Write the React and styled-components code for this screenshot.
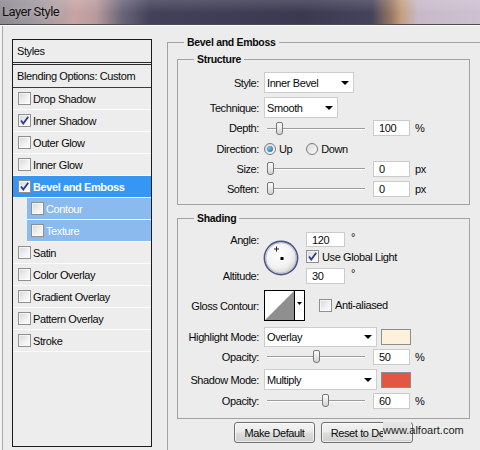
import React from "react";
import styled, { createGlobalStyle } from "styled-components";

const GlobalStyle = createGlobalStyle`
  body {
    margin: 0;
    background: #ececec;
  }
  * {
    box-sizing: border-box;
  }
`;

const effects = [
  { name: "Drop Shadow" },
  { name: "Inner Shadow", checked: true },
  { name: "Outer Glow" },
  { name: "Inner Glow" },
  { name: "Bevel and Emboss", checked: true, selected: true },
  { name: "Contour", sub: true },
  { name: "Texture", sub: true },
  { name: "Satin" },
  { name: "Color Overlay" },
  { name: "Gradient Overlay" },
  { name: "Pattern Overlay" },
  { name: "Stroke" },
];

const Check = ({ checked }) => (
  <CheckBox>
    {checked && (
      <svg width="11" height="11" viewBox="0 0 11 11">
        <path
          d="M2 5.5 L4.3 8.6 L9.2 1.8"
          fill="none"
          stroke="#2b3a86"
          strokeWidth="1.8"
        />
      </svg>
    )}
  </CheckBox>
);

const SliderControl = ({ value, max }) => (
  <Slider>
    <Thumb style={{ left: 3.5 + (value / max) * 91 }} />
  </Slider>
);

const Dropdown = ({ width, height, children }) => (
  <Select $w={width} $h={height}>
    <span>{children}</span>
    <Arrow />
  </Select>
);

const App = () => {
  return (
    <Window>
      <GlobalStyle />
      <TitleBar>
        <Title>Layer Style</Title>
      </TitleBar>
      <Body>
        <StylesPanel>
          <HeaderRow>Styles</HeaderRow>
          <BlendRow>Blending Options: Custom</BlendRow>
          {effects.map((fx) => (
            <EffectRow key={fx.name} $selected={fx.selected} $sub={fx.sub}>
              <Check checked={fx.checked} />
              <span>{fx.name}</span>
            </EffectRow>
          ))}
        </StylesPanel>

        <RightCol>
          <OuterGroup>
            <Legend>Bevel and Emboss</Legend>
            <Inner>
              <Group>
                <Legend>Structure</Legend>
                <Row $h={21}>
                  <Label>Style:</Label>
                  <Dropdown width={90}>Inner Bevel</Dropdown>
                </Row>
                <Row $h={21} $mt={4}>
                  <Label>Technique:</Label>
                  <Dropdown width={74}>Smooth</Dropdown>
                </Row>
                <Row $h={18} $mt={1}>
                  <Label>Depth:</Label>
                  <SliderControl value={100} max={1000} />
                  <Field>100</Field>
                  <Unit>%</Unit>
                </Row>
                <Row $h={20} $mt={2}>
                  <Label>Direction:</Label>
                  <Radio $checked />
                  <RadioText>Up</RadioText>
                  <Radio />
                  <RadioText>Down</RadioText>
                </Row>
                <Row $h={17} $mt={1}>
                  <Label>Size:</Label>
                  <SliderControl value={0} max={250} />
                  <Field>0</Field>
                  <Unit>px</Unit>
                </Row>
                <Row $h={17} $mt={3}>
                  <Label>Soften:</Label>
                  <SliderControl value={0} max={16} />
                  <Field>0</Field>
                  <Unit>px</Unit>
                </Row>
              </Group>

              <Group $mt={7} $pb={9}>
                <Legend>Shading</Legend>
                <AngleBlock>
                  <AngleLabels>
                    <Label $h={15}>Angle:</Label>
                    <Label $h={16}>Altitude:</Label>
                  </AngleLabels>
                  <Dial>
                    <svg width="36" height="36" viewBox="0 0 36 36">
                      <defs>
                        <radialGradient id="dialFill" cx="42%" cy="38%" r="65%">
                          <stop offset="0" stopColor="#ffffff" />
                          <stop offset="0.65" stopColor="#f1f1f1" />
                          <stop offset="1" stopColor="#cdcdcd" />
                        </radialGradient>
                      </defs>
                      <circle
                        cx="18"
                        cy="18"
                        r="16.6"
                        fill="url(#dialFill)"
                        stroke="#4b5684"
                        strokeWidth="1.6"
                      />
                      <circle
                        cx="18"
                        cy="18"
                        r="15.2"
                        fill="none"
                        stroke="#b3b8c9"
                        strokeWidth="0.8"
                      />
                      <path
                        d="M13.5 6.5v5M11 9h5"
                        stroke="#222"
                        strokeWidth="1"
                      />
                      <rect x="17.5" y="17" width="3" height="3" fill="#000" />
                    </svg>
                  </Dial>
                  <AngleFields>
                    <Row $h={15}>
                      <Field $w={39} $h={15}>
                        120
                      </Field>
                      <Degree>°</Degree>
                    </Row>
                    <Row $h={13} $mt={3}>
                      <Check checked />
                      <CheckText>Use Global Light</CheckText>
                    </Row>
                    <Row $h={16} $mt={5}>
                      <Field $w={39}>30</Field>
                      <Degree>°</Degree>
                    </Row>
                  </AngleFields>
                </AngleBlock>

                <Row $h={31} $mt={6}>
                  <Label>Gloss Contour:</Label>
                  <svg width="41" height="31" viewBox="0 0 41 31">
                    <rect
                      x="0.5"
                      y="0.5"
                      width="40"
                      height="30"
                      fill="#fff"
                      stroke="#000"
                    />
                    <polygon points="1,30 30,30 30,1" fill="#8f8f8f" />
                    <line x1="30.5" y1="0" x2="30.5" y2="31" stroke="#000" />
                    <polygon points="33,12 38,12 35.5,15" fill="#000" />
                  </svg>
                  <AntiAlias>
                    <Check />
                    <CheckText>Anti-aliased</CheckText>
                  </AntiAlias>
                </Row>

                <Row $h={20} $mt={6}>
                  <Label>Highlight Mode:</Label>
                  <Dropdown width={113} height={20}>
                    Overlay
                  </Dropdown>
                  <Swatch $color="#fdf1dd" />
                </Row>
                <Row $h={17} $mt={1}>
                  <Label>Opacity:</Label>
                  <SliderControl value={50} max={100} />
                  <Field>50</Field>
                  <Unit>%</Unit>
                </Row>
                <Row $h={21} $mt={4}>
                  <Label>Shadow Mode:</Label>
                  <Dropdown width={113}>Multiply</Dropdown>
                  <Swatch $color="#e25744" />
                </Row>
                <Row $h={17} $mt={2}>
                  <Label>Opacity:</Label>
                  <SliderControl value={60} max={100} />
                  <Field>60</Field>
                  <Unit>%</Unit>
                </Row>
              </Group>

              <Buttons>
                <Button $w={81}>Make Default</Button>
                <Button $w={92}>Reset to Default</Button>
              </Buttons>
            </Inner>
          </OuterGroup>
        </RightCol>
      </Body>
      <Watermark>www.alfoart.com</Watermark>
    </Window>
  );
};

const Window = styled.div`
  position: relative;
  width: 480px;
  height: 450px;
  overflow: hidden;
  background: #ececec;
  font-family: "Liberation Sans", Arial, sans-serif;
  font-size: 11px;
  letter-spacing: -0.4px;
  color: #0a0a0a;
`;

const TitleBar = styled.div`
  height: 25px;
  display: flex;
  align-items: center;
  padding: 0 0 1px 2px;
  border-bottom: 1px solid #4d4d4f;
  background: linear-gradient(
      180deg,
      rgba(255, 255, 255, 0.14) 0%,
      rgba(255, 255, 255, 0) 55%
    ),
    linear-gradient(
      90deg,
      #8d8991 0px,
      #a29aa2 40px,
      #c7a4a3 76px,
      #b99a9c 96px,
      #6b6579 122px,
      #43415a 150px,
      #3a3950 300px,
      #45435b 372px,
      #9c7a62 392px,
      #c39e7f 401px,
      #c8b9c9 418px,
      #cdc1d1 480px
    );
`;

const Title = styled.span`
  font-family: Roboto, "Liberation Sans", sans-serif;
  font-size: 13px;
  letter-spacing: -0.5px;
  color: #111;
  text-shadow: 0 0 6px rgba(255, 240, 240, 0.55);
`;

const Body = styled.div`
  display: flex;
  gap: 15px;
  height: 425px;
  padding-left: 12px;
  border-top: 1px solid #fafafa;
  box-shadow: inset 2px 0 0 #f3f3f3, inset 3px 0 0 #a9a9a9;
`;

const StylesPanel = styled.div`
  flex-shrink: 0;
  width: 140px;
  height: 408px;
  margin-top: 13px;
  border: 1px solid #1c1c1c;
  background: #ededed;
`;

const HeaderRow = styled.div`
  display: flex;
  align-items: center;
  height: 25px;
  padding-left: 4px;
  border-bottom: 3px double #2a2a2a;
`;

const BlendRow = styled.div`
  display: flex;
  align-items: center;
  height: 23px;
  padding-left: 4px;
  border-bottom: 1px solid #3a3a3a;
  white-space: nowrap;
`;

const EffectRow = styled.div`
  display: flex;
  align-items: center;
  gap: 2px;
  height: 22px;
  margin-left: ${(p) => (p.$sub ? 14 : 0)}px;
  padding-left: ${(p) => (p.$sub ? 4 : 5)}px;
  border-bottom: 1px solid #fbfbfb;
  background: ${(p) =>
    p.$selected ? "#3597f3" : p.$sub ? "#8bbbee" : "transparent"};
  color: ${(p) => (p.$selected || p.$sub ? "#fff" : "#0a0a0a")};
  font-weight: ${(p) => (p.$selected ? "bold" : "normal")};
  white-space: nowrap;
`;

const CheckBox = styled.span`
  flex-shrink: 0;
  display: inline-flex;
  align-items: center;
  justify-content: center;
  width: 13px;
  height: 13px;
  border: 1px solid #8e8f8f;
  background: linear-gradient(135deg, #d6d6d6 0%, #f2f2f2 60%, #fdfdfd 100%);
  box-shadow: inset 0 0 0 1px rgba(255, 255, 255, 0.6);
`;

const RightCol = styled.div`
  flex-shrink: 0;
  width: 330px;
  padding-top: 10px;
`;

const OuterGroup = styled.fieldset`
  margin: 0;
  padding: 0 0 30px;
  min-width: 0;
  border: 1px solid #a2a2a2;
  border-bottom: none;
`;

const Legend = styled.legend`
  margin-left: 16px;
  padding: 0 3px;
  font-size: 10.5px;
  line-height: 13px;
  font-weight: bold;
  letter-spacing: -0.3px;
`;

const Inner = styled.div`
  padding-left: 9px;
  margin-top: 4px;
`;

const Group = styled.fieldset`
  width: 293px;
  margin: ${(p) => p.$mt || 0}px 0 0;
  padding: 6px 0 ${(p) => p.$pb || 7}px;
  min-width: 0;
  border: 1px solid #a2a2a2;
`;

const Row = styled.div`
  display: flex;
  align-items: center;
  height: ${(p) => p.$h}px;
  margin-top: ${(p) => p.$mt || 0}px;
  white-space: nowrap;
`;

const Label = styled.div`
  flex-shrink: 0;
  width: 81px;
  height: ${(p) => (p.$h ? `${p.$h}px` : "auto")};
  display: flex;
  align-items: center;
  justify-content: flex-end;
  margin-right: 5px;
  white-space: nowrap;
`;

const Select = styled.div`
  flex-shrink: 0;
  display: flex;
  align-items: center;
  justify-content: space-between;
  width: ${(p) => p.$w}px;
  height: ${(p) => p.$h || 21}px;
  padding: 0 4px 0 2px;
  background: #fff;
  border: 1px solid #cdcdcd;
`;

const Arrow = styled.span`
  width: 0;
  height: 0;
  border-left: 4px solid transparent;
  border-right: 4px solid transparent;
  border-top: 4px solid #000;
`;

const Slider = styled.div`
  position: relative;
  flex-shrink: 0;
  width: 98px;
  height: 13px;
  margin: 0 8px 0 3px;

  &::before {
    content: "";
    position: absolute;
    left: 0;
    right: 0;
    top: 6px;
    height: 1px;
    background: #9d9d9d;
    box-shadow: 0 1px 0 #fff;
  }
`;

const Thumb = styled.span`
  position: absolute;
  top: 0;
  width: 7px;
  height: 13px;
  margin-left: -3.5px;
  border: 1px solid #767676;
  border-radius: 2px 2px 3px 3px;
  background: linear-gradient(#fdfdfd, #d3d3d3);
`;

const Field = styled.div`
  flex-shrink: 0;
  display: flex;
  align-items: center;
  width: ${(p) => p.$w || 37}px;
  height: ${(p) => p.$h || 16}px;
  padding-left: 5px;
  background: #fff;
  border: 1px solid #cbcbcb;
`;

const Unit = styled.span`
  margin-left: 5px;
`;

const Degree = styled.span`
  align-self: flex-start;
  margin-left: 6px;
  font-size: 11px;
  line-height: 11px;
`;

const Radio = styled.span`
  flex-shrink: 0;
  display: inline-flex;
  align-items: center;
  justify-content: center;
  width: 12px;
  height: 12px;
  border-radius: 50%;
  border: 1px solid #7b7b7b;
  background: linear-gradient(135deg, #d8d8d8, #fbfbfb);

  &::after {
    content: "";
    display: ${(p) => (p.$checked ? "block" : "none")};
    width: 6px;
    height: 6px;
    border-radius: 50%;
    background: radial-gradient(circle at 35% 35%, #7cc0f0, #1b5fa8);
  }
`;

const RadioText = styled.span`
  margin: 0 14px 0 3px;
`;

const CheckText = styled.span`
  margin-left: 3px;
`;

const AngleBlock = styled.div`
  display: flex;
  height: 52px;
  margin-top: 1px;
`;

const AngleLabels = styled.div`
  display: flex;
  flex-direction: column;
  justify-content: space-between;
`;

const Dial = styled.div`
  flex-shrink: 0;
  width: 36px;
  height: 36px;
  margin: 8px 7px 0 -1px;
`;

const AngleFields = styled.div`
  display: flex;
  flex-direction: column;
`;

const AntiAlias = styled.div`
  display: flex;
  align-items: center;
  margin-left: 14px;
  margin-top: -1px;
`;

const Swatch = styled.span`
  flex-shrink: 0;
  width: 30px;
  height: 16px;
  margin-left: 4px;
  border: 1px solid #8d8d8d;
  background: ${(p) => p.$color};
`;

const Buttons = styled.div`
  display: flex;
  gap: 6px;
  margin-top: 3px;
  padding-left: 57px;
`;

const Button = styled.div`
  display: flex;
  align-items: center;
  justify-content: center;
  width: ${(p) => p.$w}px;
  height: 21px;
  border: 1px solid #707070;
  border-radius: 3px;
  background: linear-gradient(#f3f3f3 0%, #ebebeb 48%, #dddddd 52%, #cfcfcf 100%);
  box-shadow: inset 0 0 0 1px rgba(255, 255, 255, 0.65);
  white-space: nowrap;
`;

const Watermark = styled.div`
  position: absolute;
  left: 383px;
  top: 422px;
  height: 18px;
  line-height: 17px;
  font-size: 11px;
  letter-spacing: 0;
  color: #1d1d1d;
  background: linear-gradient(90deg, #e4e4e4 0, #e4e4e4 28px, transparent 28px);
`;

export default App;
